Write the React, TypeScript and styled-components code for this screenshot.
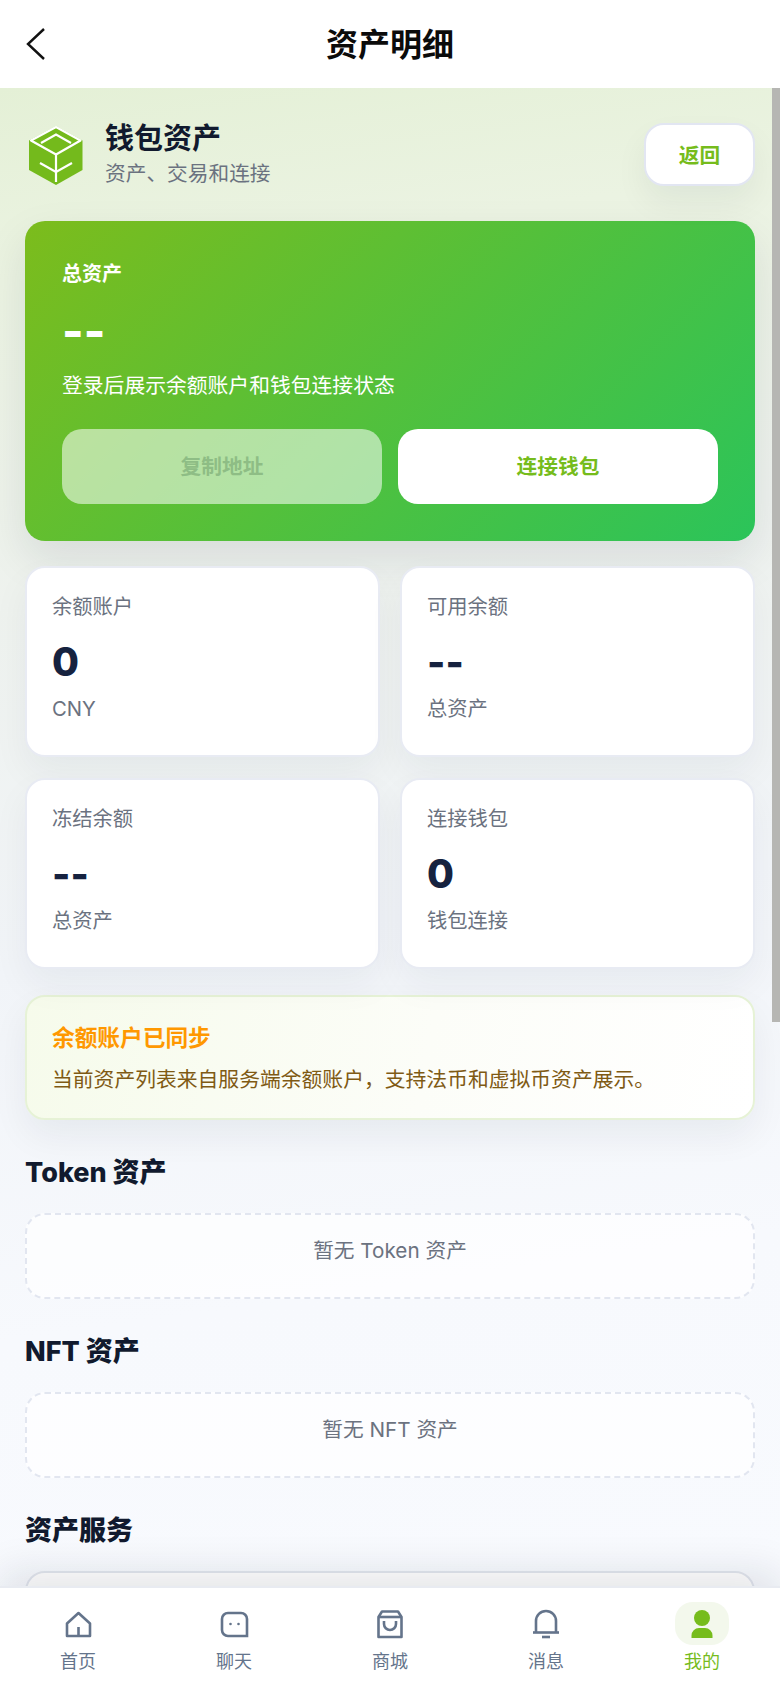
import React from 'react';
import styled, { createGlobalStyle } from 'styled-components';

const GlobalStyle = createGlobalStyle`
  html, body {
    margin: 0;
    padding: 0;
    height: 100%;
    background: #fff;
  }
  * {
    box-sizing: border-box;
  }
`;

const stats = [
  { label: '余额账户', value: '0', unit: 'CNY' },
  { label: '可用余额', value: '--', unit: '总资产' },
  { label: '冻结余额', value: '--', unit: '总资产' },
  { label: '连接钱包', value: '0', unit: '钱包连接' },
];

const tabs = [
  { label: '首页', icon: <HomeIcon /> },
  { label: '聊天', icon: <ChatIcon /> },
  { label: '商城', icon: <BagIcon /> },
  { label: '消息', icon: <BellIcon /> },
  { label: '我的', icon: <PersonIcon />, active: true },
];

function HomeIcon() {
  return (
    <svg width="32" height="32" viewBox="0 0 32 32" fill="none" stroke="#64748b" strokeWidth="2.600">
      <path d="M5 28V15.500L16.500 5L28 15.500V28Z" strokeLinejoin="round" />
      <path d="M16.500 19V28" />
    </svg>
  );
}

function ChatIcon() {
  return (
    <svg width="32" height="32" viewBox="0 0 32 32" fill="none" stroke="#64748b" strokeWidth="2.600">
      <path d="M10 5h13a6 6 0 0 1 6 6v17H10a6 6 0 0 1-6-6V11a6 6 0 0 1 6-6Z" />
      <circle cx="12.500" cy="16" r="1.300" fill="#64748b" stroke="none" />
      <circle cx="20.500" cy="16" r="1.300" fill="#64748b" stroke="none" />
    </svg>
  );
}

function BagIcon() {
  return (
    <svg width="32" height="32" viewBox="0 0 32 32" fill="none" stroke="#64748b" strokeWidth="2.600">
      <path d="M4.500 29V9L8 3.500h16l3.500 5.500v20Z" strokeLinejoin="round" />
      <path d="M4.500 9h23" />
      <path d="M10 13v3a6 6 0 0 0 12 0v-3" />
    </svg>
  );
}

function BellIcon() {
  return (
    <svg width="32" height="32" viewBox="0 0 32 32" fill="none" stroke="#64748b" strokeWidth="2.600">
      <path d="M6 24V13a10 10 0 0 1 20 0v11" />
      <path d="M3 24.500h26" />
      <path d="M12 29h8" />
    </svg>
  );
}

function PersonIcon() {
  return (
    <svg width="32" height="32" viewBox="0 0 32 32" fill="#76bc1c">
      <circle cx="16" cy="10" r="8" />
      <path d="M5.500 30v-2.500a7.500 7.500 0 0 1 7.500-7.500h6a7.500 7.500 0 0 1 7.500 7.500V30Z" />
    </svg>
  );
}

function BackChevron() {
  return (
    <svg width="22" height="34" viewBox="0 0 22 34" fill="none" stroke="#111" strokeWidth="2.400">
      <path d="M19 2 3 17 19 32" />
    </svg>
  );
}

const App: React.FC = () => {
  return (
    <Screen>
      <GlobalStyle />
      <TopBar>
        <BackButton>
          <BackChevron />
        </BackButton>
        <PageTitle>资产明细</PageTitle>
      </TopBar>

      <Viewport>
        <ScrollThumb />
        <Content>
          <IntroRow>
            <LogoMark viewBox="0 0 60 60">
              <path d="M30 1 56.500 15.500V45L30 60 3 45V15.500Z" fill="#74ba1c" />
              <g fill="none" stroke="#fff" strokeWidth="2.200">
                <path d="M5 15.500 30 2 54.500 15.500 30 29.500Z" strokeLinejoin="round" />
                <path d="M15 18 30 9.500 45 18" />
                <path d="M30 29.500V57" />
                <path d="M14 38 30 47 46 38" />
              </g>
            </LogoMark>
            <IntroText>
              <IntroTitle>钱包资产</IntroTitle>
              <IntroSub>资产、交易和连接</IntroSub>
            </IntroText>
            <ReturnButton>返回</ReturnButton>
          </IntroRow>

          <HeroCard>
            <HeroLabel>总资产</HeroLabel>
            <HeroValue>--</HeroValue>
            <HeroHint>登录后展示余额账户和钱包连接状态</HeroHint>
            <HeroActions>
              <HeroButton $disabled>复制地址</HeroButton>
              <HeroButton>连接钱包</HeroButton>
            </HeroActions>
          </HeroCard>

          <StatGrid>
            {stats.map((s) => (
              <StatCard key={s.label}>
                <StatLabel>{s.label}</StatLabel>
                <StatValue>{s.value}</StatValue>
                <StatUnit>{s.unit}</StatUnit>
              </StatCard>
            ))}
          </StatGrid>

          <Notice>
            <NoticeTitle>余额账户已同步</NoticeTitle>
            <NoticeBody>当前资产列表来自服务端余额账户，支持法币和虚拟币资产展示。</NoticeBody>
          </Notice>

          <SectionTitle>Token 资产</SectionTitle>
          <EmptyBox>暂无 Token 资产</EmptyBox>

          <SectionTitle>NFT 资产</SectionTitle>
          <EmptyBox>暂无 NFT 资产</EmptyBox>

          <SectionTitle>资产服务</SectionTitle>
          <ServiceCard />
        </Content>
      </Viewport>

      <TabBar>
        {tabs.map((t) => (
          <TabItem key={t.label}>
            <TabIconWrap $active={t.active}>{t.icon}</TabIconWrap>
            <TabLabel $active={t.active}>{t.label}</TabLabel>
          </TabItem>
        ))}
      </TabBar>
    </Screen>
  );
};

export default App;

const sans = `Inter, "Noto Sans CJK SC", sans-serif`;

const Screen = styled.div`
  width: 780px;
  height: 1688px;
  display: flex;
  flex-direction: column;
  overflow: hidden;
  font-family: ${sans};
`;

const TopBar = styled.header`
  position: relative;
  flex: 0 0 88px;
  display: flex;
  align-items: center;
  justify-content: center;
  padding-bottom: 4px;
  background: #fff;
`;

const BackButton = styled.div`
  position: absolute;
  left: 25px;
  top: 27px;
  display: flex;
`;

const PageTitle = styled.h1`
  margin: 0;
  font-size: 32px;
  font-weight: 700;
  color: #0b0b0b;
`;

const Viewport = styled.main`
  position: relative;
  flex: 1;
  min-height: 0;
  overflow: hidden;
  background: linear-gradient(172deg, #e4f0d6 0%, #ebf3e2 12%, #eef2ee 32%, #f1f4f8 55%, #f7f9fd 78%, #f8fafe 100%);
`;

// headless chrome hides native scrollbars, so the thumb in the picture is drawn over the page
const ScrollThumb = styled.div`
  position: absolute;
  top: 0;
  right: 0;
  width: 8px;
  height: 934px;
  background: #b6b6b3;
`;

const Content = styled.div`
  padding: 32px 25px 0;
`;

const IntroRow = styled.div`
  display: flex;
  align-items: center;
  margin-bottom: 32px;
`;

const LogoMark = styled.svg`
  flex: 0 0 60px;
  width: 60px;
  height: 60px;
  margin: 0 19px 0 1px;
`;

const IntroText = styled.div`
  flex: 1;
  padding-top: 1px;
`;

const IntroTitle = styled.div`
  font-size: 29px;
  line-height: 36px;
  font-weight: 700;
  color: #111a2e;
`;

const IntroSub = styled.div`
  margin-top: 2px;
  font-size: 20.700px;
  line-height: 30px;
  color: #6b7280;
`;

const ReturnButton = styled.div`
  width: 111px;
  height: 63px;
  display: flex;
  align-items: center;
  justify-content: center;
  padding-bottom: 2px;
  border: 2px solid #e2e6f2;
  border-radius: 20px;
  background: #fff;
  color: #76bc1c;
  font-size: 20.700px;
  font-weight: 700;
  box-shadow: 0 16px 32px rgba(20, 30, 50, 0.06);
`;

const HeroCard = styled.section`
  height: 320px;
  padding: 38px 37px 0;
  border-radius: 20px;
  background: linear-gradient(135deg, #7cbc1c 0%, #2bc45a 100%);
  box-shadow: 0 18px 44px rgba(20, 30, 50, 0.1);
  color: #fff;
`;

const HeroLabel = styled.div`
  font-size: 20px;
  line-height: 30px;
  font-weight: 700;
`;

const HeroValue = styled.div`
  margin-top: 14px;
  font-size: 46px;
  line-height: 56px;
  font-weight: 800;
`;

const HeroHint = styled.div`
  margin-top: 11px;
  font-size: 20.800px;
  line-height: 32px;
`;

const HeroActions = styled.div`
  display: grid;
  grid-template-columns: 1fr 1fr;
  gap: 16px;
  margin-top: 27px;
`;

const HeroButton = styled.div<{ $disabled?: boolean }>`
  height: 75px;
  display: flex;
  align-items: center;
  justify-content: center;
  padding-bottom: 3px;
  border-radius: 20px;
  background: ${(p) => (p.$disabled ? 'rgba(255, 255, 255, 0.55)' : '#fff')};
  color: ${(p) => (p.$disabled ? '#8ebd85' : '#76bc1c')};
  font-size: 20.700px;
  font-weight: 700;
`;

const StatGrid = styled.div`
  display: grid;
  grid-template-columns: 1fr 1fr;
  gap: 21px 20px;
  margin-top: 25px;
`;

const StatCard = styled.div`
  height: 191px;
  padding: 23px 25px 0;
  border: 2px solid #e8ebf3;
  border-radius: 20px;
  background: #fff;
  box-shadow: 0 16px 36px rgba(20, 30, 50, 0.05);
`;

const StatLabel = styled.div`
  font-size: 20.300px;
  line-height: 32px;
  color: #6b7280;
`;

const StatValue = styled.div`
  margin-top: 14px;
  font-size: 39px;
  line-height: 50px;
  font-weight: 800;
  color: #16223f;
`;

const StatUnit = styled.div`
  margin-top: 6px;
  font-size: 20.300px;
  line-height: 32px;
  color: #6b7280;
`;

const Notice = styled.div`
  height: 125px;
  margin-top: 26px;
  padding: 24px 25px 0;
  border: 2px solid #e6f2d6;
  border-radius: 20px;
  background: linear-gradient(100deg, #f6fbeb 0%, #fcfdf8 55%, #ffffff 100%);
  box-shadow: 0 16px 36px rgba(20, 30, 50, 0.06);
`;

const NoticeTitle = styled.div`
  font-size: 22.700px;
  line-height: 34px;
  font-weight: 700;
  color: #ff9800;
`;

const NoticeBody = styled.div`
  margin-top: 9px;
  font-size: 20.800px;
  line-height: 32px;
  color: #7f5a14;
`;

const SectionTitle = styled.h2`
  margin: 35px 0 22px;
  font-size: 27px;
  line-height: 36px;
  font-weight: 800;
  color: #111a2e;
`;

const EmptyBox = styled.div`
  height: 86px;
  padding-top: 20px;
  border: 2px dashed #e2e6f0;
  border-radius: 20px;
  background: rgba(255, 255, 255, 0.7);
  text-align: center;
  font-size: 20.700px;
  line-height: 32px;
  color: #6b7280;
`;

const ServiceCard = styled.div`
  height: 120px;
  border: 2px solid #e2e6ee;
  border-radius: 20px;
  background: #fff;
`;

const TabBar = styled.nav`
  position: relative;
  z-index: 2;
  flex: 0 0 102px;
  display: grid;
  grid-template-columns: repeat(5, 1fr);
  padding-top: 14px;
  border-top: 2px solid #e8ebf1;
  background: #fff;
  box-shadow: 0 -14px 40px rgba(20, 30, 50, 0.11);
`;

const TabItem = styled.div`
  display: flex;
  flex-direction: column;
  align-items: center;
`;

const TabIconWrap = styled.div<{ $active?: boolean }>`
  width: 54px;
  height: 43px;
  display: flex;
  align-items: center;
  justify-content: center;
  border-radius: 18px;
  background: ${(p) => (p.$active ? '#f3f8ec' : 'transparent')};
`;

const TabLabel = styled.div<{ $active?: boolean }>`
  margin-top: 4px;
  font-size: 18px;
  line-height: 26px;
  color: ${(p) => (p.$active ? '#76bc1c' : '#64748b')};
`;
